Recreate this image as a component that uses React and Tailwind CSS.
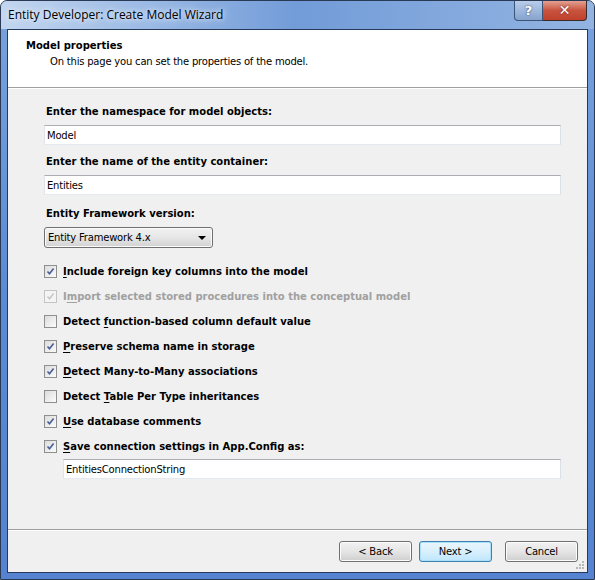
import { useState } from "react";

const TAHOMA = { fontFamily: "Tahoma, 'DejaVu Sans', sans-serif" };

function CheckBox({ checked, disabled }) {
  return (
    <span
      className={
        "inline-flex h-[13px] w-[13px] shrink-0 items-center justify-center border " +
        (disabled ? "border-[#c4c4c4] bg-[#f4f4f4]" : "border-[#8e8f8f] bg-gradient-to-br from-[#dcdcdc] to-[#fbfbfb]")
      }
    >
      {checked && (
        <svg width="9" height="9" viewBox="0 0 9 9">
          <path d="M1.5 4.5 L3.5 6.8 L7.6 1.4" fill="none" stroke={disabled ? "#c8c8c8" : "#4a5f97"} strokeWidth="1.6" />
        </svg>
      )}
    </span>
  );
}

function Option({ label, keyIdx, checked, disabled }) {
  const a = label.slice(0, keyIdx);
  const k = label[keyIdx];
  const b = label.slice(keyIdx + 1);
  return (
    <div className="flex h-[25px] items-center">
      <CheckBox checked={checked} disabled={disabled} />
      <span className={"ml-[6px] text-[10px] font-bold leading-[13px] " + (disabled ? "text-[#a0a0a0]" : "text-black")}>
        {a}
        <span className="underline underline-offset-2">{k}</span>
        {b}
      </span>
    </div>
  );
}

function TextBox({ value, className }) {
  return (
    <div
      className={
        "flex h-[20px] items-center border border-t-[#abadb3] border-l-[#e2e3ea] border-r-[#dbdfe6] border-b-[#e3e9ef] bg-white px-[2px] text-[10px] tracking-[-0.2px] " +
        (className || "")
      }
    >
      {value}
    </div>
  );
}

function Button({ children, focused }) {
  return (
    <div
      className={
        "flex h-[21px] w-[73px] items-center justify-center rounded-[3px] border text-[10px] tracking-[-0.2px] " +
        (focused
          ? "border-[#3c7fb1] bg-gradient-to-b from-[#eaf6fd] via-[#d9f0fc] to-[#bee6fd] shadow-[inset_0_0_0_1px_#a8e1f8]"
          : "border-[#707070] bg-gradient-to-b from-[#f2f2f2] via-[#e5e5e5] to-[#cfcfcf] shadow-[inset_0_0_0_1px_#fcfcfc]")
      }
    >
      {children}
    </div>
  );
}

export default function App() {
  const [opts] = useState([
    { label: "Include foreign key columns into the model", k: 0, checked: true },
    { label: "Import selected stored procedures into the conceptual model", k: 1, checked: true, disabled: true },
    { label: "Detect function-based column default value", k: 7, checked: false },
    { label: "Preserve schema name in storage", k: 0, checked: true },
    { label: "Detect Many-to-Many associations", k: 0, checked: true },
    { label: "Detect Table Per Type inheritances", k: 7, checked: false },
    { label: "Use database comments", k: 0, checked: true },
    { label: "Save connection settings in App.Config as:", k: 0, checked: true },
  ]);

  return (
    <div className="h-[580px] w-[595px] overflow-hidden bg-white" style={TAHOMA}>
      <div className="flex h-full w-full flex-col rounded-t-[7px] border border-[#2a3a54] bg-gradient-to-b from-[#7aa3dc] via-[#5b8bd4] to-[#5583cf]">
        {/* title bar */}
        <div className="flex h-[28px] shrink-0 items-start rounded-t-[6px] bg-gradient-to-r from-[#c3d6ef] via-[#729cd8] to-[#93b4e2]">
          <div
            className="ml-[7px] mt-[5px] text-[12px] text-black"
            style={{ fontFamily: "'Open Sans', 'Noto Sans', sans-serif", textShadow: "0 0 8px #e8f0fb, 0 0 4px #e8f0fb" }}
          >
            Entity Developer: Create Model Wizard
          </div>
          <div className="ml-auto mr-[7px] flex">
            <div className="flex h-[20px] w-[29px] items-center justify-center rounded-bl-[4px] border border-t-0 border-[#3b5478] bg-gradient-to-b from-[#b9cdea] via-[#9fb8dd] to-[#86a3cd] text-[13px] font-bold text-white [text-shadow:0_0_2px_#334]">
              ?
            </div>
            <div className="flex h-[20px] w-[44px] items-center justify-center rounded-br-[4px] border border-l-0 border-t-0 border-[#3b2a2a] bg-gradient-to-b from-[#e4a091] via-[#c7533f] to-[#c0412c] text-[14px] font-bold text-white [text-shadow:0_0_2px_#522]">
              ✕
            </div>
          </div>
        </div>

        {/* client area */}
        <div className="mx-[6px] mb-[6px] flex flex-1 flex-col border border-[#27395a] bg-[#f0f0f0]">
          <div className="h-[58px] shrink-0 border-b border-[#a0a0a0] bg-white">
            <div className="ml-[18px] mt-[9px] text-[10px] font-bold leading-[13px]">Model properties</div>
            <div className="ml-[42px] mt-[3px] text-[10px] leading-[13px] tracking-[-0.2px]">
              On this page you can set the properties of the model.
            </div>
          </div>
          <div className="h-px bg-white" />

          <div className="flex flex-1 flex-col pl-[36px] pr-[26px]">
            <div className="ml-[2px] mt-[16px] text-[10px] font-bold leading-[13px]">Enter the namespace for model objects:</div>
            <TextBox value="Model" className="mt-[7px]" />
            <div className="ml-[2px] mt-[10px] text-[10px] font-bold leading-[13px]">Enter the name of the entity container:</div>
            <TextBox value="Entities" className="mt-[7px]" />
            <div className="ml-[2px] mt-[12px] text-[10px] font-bold leading-[13px]">Entity Framework version:</div>
            <div className="mt-[7px] flex h-[21px] w-[169px] items-center rounded-[3px] border border-[#707070] bg-gradient-to-b from-[#f2f2f2] via-[#e6e6e6] to-[#d2d2d2] pl-[3px] pr-[6px] text-[10px] tracking-[-0.2px] shadow-[inset_0_0_0_1px_#fbfbfb]">
              Entity Framework 4.x
              <svg className="ml-auto" width="8" height="4" viewBox="0 0 8 4">
                <path d="M0 0 H8 L4 4 Z" fill="#000" />
              </svg>
            </div>

            <div className="mt-[11px] flex flex-col">
              {opts.map((o) => (
                <Option key={o.label} label={o.label} keyIdx={o.k} checked={o.checked} disabled={o.disabled} />
              ))}
            </div>
            <TextBox value="EntitiesConnectionString" className="ml-[19px]" />
          </div>

          <div className="h-px bg-[#a0a0a0]" />
          <div className="h-px bg-white" />
          <div className="relative flex h-[41px] shrink-0 items-start justify-end gap-[7px] pr-[9px] pt-[10px]">
            <Button>&lt; Back</Button>
            <Button focused>Next &gt;</Button>
            <div className="ml-[6px]">
              <Button>Cancel</Button>
            </div>
            <svg className="absolute bottom-[2px] right-[2px]" width="10" height="10" viewBox="0 0 10 10">
              <g fill="#b8b8b8">
                <rect x="7" y="1" width="2" height="2" />
                <rect x="4" y="4" width="2" height="2" />
                <rect x="7" y="4" width="2" height="2" />
                <rect x="1" y="7" width="2" height="2" />
                <rect x="4" y="7" width="2" height="2" />
                <rect x="7" y="7" width="2" height="2" />
              </g>
            </svg>
          </div>
        </div>
      </div>
    </div>
  );
}
